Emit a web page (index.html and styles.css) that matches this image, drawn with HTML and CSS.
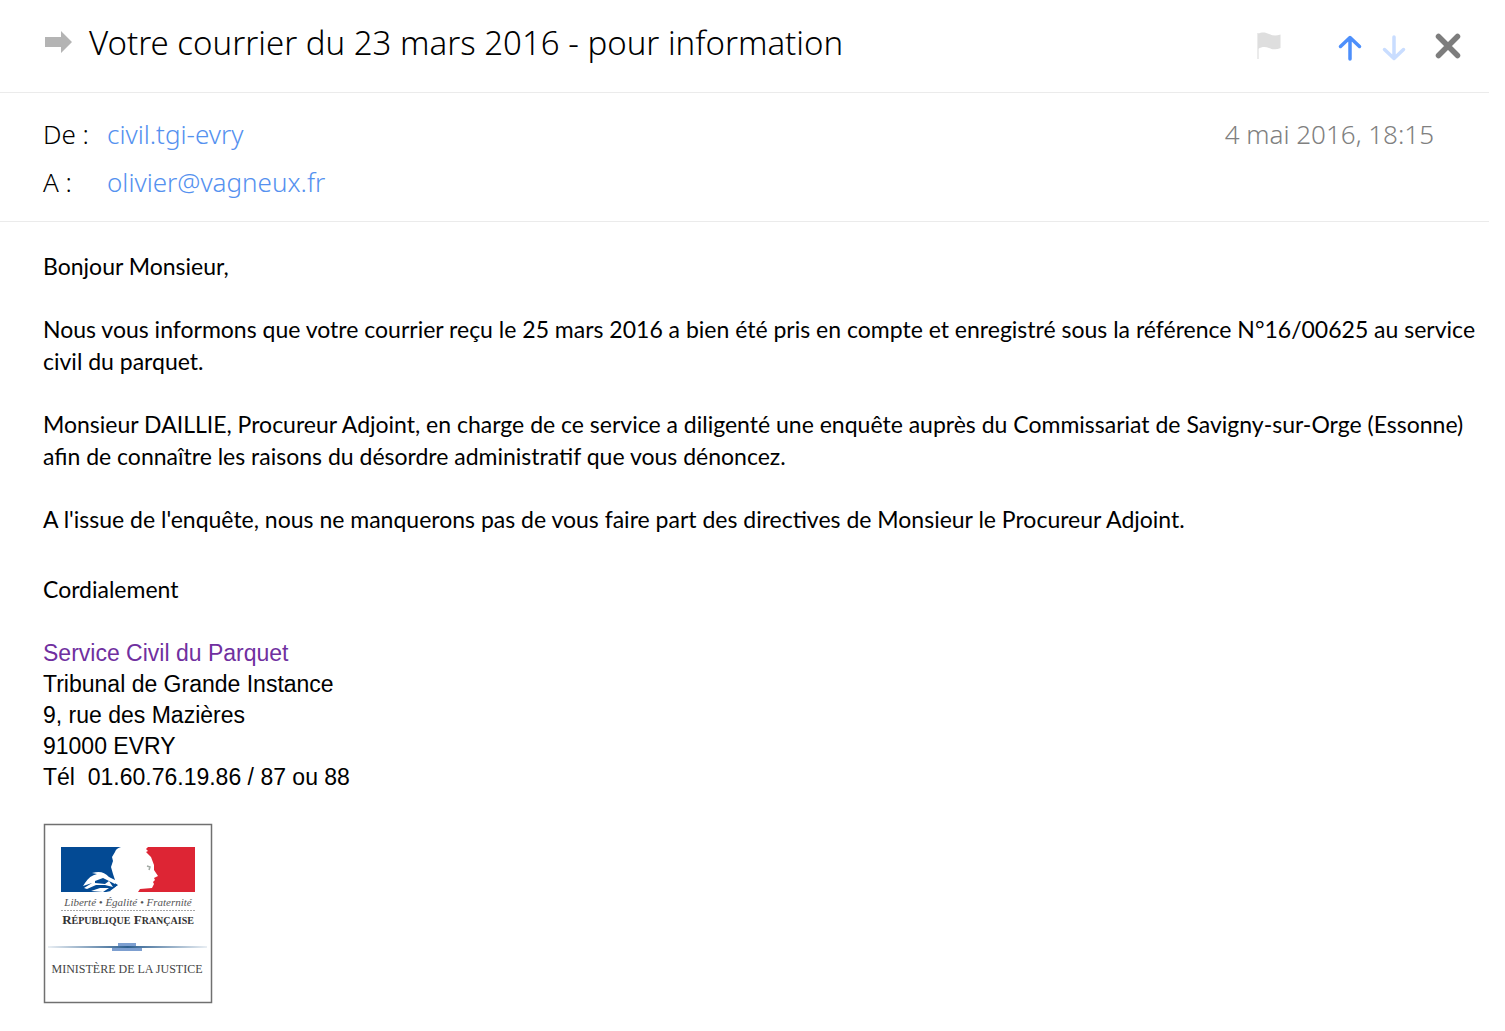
FILE: index.html
```html
<!DOCTYPE html>
<html lang="fr">
<head>
    <meta charset="UTF-8">
    <meta name="viewport" content="width=device-width, initial-scale=1.0">
    <title>Votre courrier du 23 mars 2016 - pour information</title>
    <link rel="stylesheet" href="styles.css">
</head>
<body>
    <main class="mail">
        <header class="mail-header">
            <svg class="forward-icon" viewBox="0 0 27 22" aria-hidden="true">
                <path d="M0 6h16V0l11 11-11 11v-6H0z" fill="#b4b4b4"/>
            </svg>
            <h1>Votre courrier du 23 mars 2016 - pour information</h1>
            <div class="actions">
                <button type="button" class="flag-btn" aria-label="Marquer">
                    <svg width="24" height="28" viewBox="0 0 24 28">
                        <path d="M1 1v26" stroke="#e4e4e4" stroke-width="1.5"/>
                        <path d="M1 2C5-.5 9 .5 12 2s7 2 11.500 .5V16c-4 2-8 1.500-11.500 0S5 14.500 1 17z" fill="#dedede"/>
                    </svg>
                </button>
                <button type="button" class="prev-btn" aria-label="Message précédent">
                    <svg width="24" height="26" viewBox="0 0 24 26">
                        <path d="M12 24V3M2.500 11.500L12 2.500l9.500 9" fill="none" stroke="#4d8ffb" stroke-width="3.500" stroke-linecap="round" stroke-linejoin="round"/>
                    </svg>
                </button>
                <button type="button" class="next-btn" aria-label="Message suivant" disabled>
                    <svg width="24" height="26" viewBox="0 0 24 26">
                        <path d="M12 2v21M2.500 14.500L12 23.500l9.500-9" fill="none" stroke="#c9ddff" stroke-width="3.500" stroke-linecap="round" stroke-linejoin="round"/>
                    </svg>
                </button>
                <button type="button" class="close-btn" aria-label="Fermer">
                    <svg width="26" height="26" viewBox="0 0 26 26">
                        <path d="M3.500 3.500l19 19M22.500 3.500l-19 19" stroke="#7d7d7d" stroke-width="5.500" stroke-linecap="round"/>
                    </svg>
                </button>
            </div>
        </header>

        <section class="mail-info">
            <dl class="people">
                <dt>De :</dt>
                <dd><a href="#">civil.tgi-evry</a></dd>
                <dt>A :</dt>
                <dd><a href="mailto:olivier@vagneux.fr">olivier@vagneux.fr</a></dd>
            </dl>
            <time datetime="2016-05-04T18:15">4 mai 2016, 18:15</time>
        </section>

        <article class="mail-body">
            <p>Bonjour Monsieur,</p>
            <p>Nous vous informons que votre courrier reçu le 25 mars 2016 a bien été pris en compte et enregistré sous la référence N°16/00625 au service<br>civil du parquet.</p>
            <p>Monsieur DAILLIE, Procureur Adjoint, en charge de ce service a diligenté une enquête auprès du Commissariat de Savigny-sur-Orge (Essonne)<br>afin de connaître les raisons du désordre administratif que vous dénoncez.</p>
            <p>A l'issue de l'enquête, nous ne manquerons pas de vous faire part des directives de Monsieur le Procureur Adjoint.</p>
            <p class="closing">Cordialement</p>

            <!-- Signature -->
            <address class="signature">
                <span class="service">Service Civil du Parquet</span><br>
                Tribunal de Grande Instance<br>
                9, rue des Mazières<br>
                91000 EVRY<br>
                Tél&nbsp; 01.60.76.19.86 / 87 ou 88
            </address>

            <svg class="logo" width="170" height="181" viewBox="0 0 170 181" role="img" aria-label="Ministère de la Justice">
                <defs>
                    <linearGradient id="rule" x1="0" x2="1" y1="0" y2="0">
                        <stop offset="0" stop-color="#2d5f8f" stop-opacity="0.1"/>
                        <stop offset="0.5" stop-color="#2d5f8f"/>
                        <stop offset="1" stop-color="#2d5f8f" stop-opacity="0.1"/>
                    </linearGradient>
                </defs>
                <rect x="1.500" y="1.500" width="167" height="178" fill="#fff" stroke="#707070" stroke-width="1.500"/>
                <!-- Flag with Marianne -->
                <path d="M18 24h60c-3 1-5 2-6 5l-3 5 1 4-2 6 2 7 2 6-2 2 5 3-7 6-5 1H18z" fill="#034a94"/>
                <path d="M105 24h47v45H95l2-3 12-1 2-4-1-2 2-2-1-2 4-2-4-6v-5l-3-8-5-5 2-1-2-2z" fill="#dd2534"/>
                <!-- Hand and sleeve -->
                <path d="M42 60c3-5 7-8 12-9l-5-1c8-2 12-1 17 4l6 3v4l-6-3 4 6-8-2h-9l-9 4-3-1 8-5-9 3z" fill="#fff"/>
                <path d="M48 68l9-3h9l-6 4zM67 68l7-5v3l-4 3z" fill="#fff"/>
                <path d="M52 58l8-3 6 3-4 3-10-1z" fill="#034a94"/>
                <path d="M104 43l3 1-1 3" fill="none" stroke="#a2a9a4" stroke-width="1.500"/>
                <text class="motto" x="85" y="83" text-anchor="middle">Liberté • Égalité • Fraternité</text>
                <path d="M18 87.500h134" stroke="#a5a5a5" stroke-dasharray="2 1"/>
                <text class="republic" x="85" y="101" text-anchor="middle">R<tspan class="small">ÉPUBLIQUE</tspan> F<tspan class="small">RANÇAISE</tspan></text>
                <rect x="5" y="123" width="159" height="2" fill="url(#rule)"/>
                <path d="M75 120h18v3h-18zM69 125h30v3H69z" fill="#7d9fd0"/>
                <text class="ministry" x="84" y="150" text-anchor="middle">MINISTÈRE DE LA JUSTICE</text>
            </svg>
        </article>
    </main>
</body>
</html>
```

FILE: styles.css
```css
/* Global Styles */
body {
    margin: 0;
    background-color: #fff;
    color: #000;
    font-family: "Noto Sans", "Open Sans", sans-serif;
}

.mail {
    margin-right: 16px;
}

/* Header Styles */
.mail-header {
    display: flex;
    align-items: center;
    box-sizing: border-box;
    height: 93px;
    padding: 0 28px 6px 45px;
    border-bottom: 1px solid #ebebeb;
}

.forward-icon {
    width: 27px;
    height: 22px;
    margin-bottom: 2px;
}

h1 {
    margin: 0 0 0 17px;
    font-size: 33px;
    font-weight: 300;
    line-height: 44px;
    white-space: nowrap;
}

.actions {
    display: flex;
    align-items: center;
    margin-left: auto;
    padding-top: 5px;
}

.actions button {
    display: flex;
    padding: 0;
    border: none;
    background: none;
    cursor: pointer;
}

.actions .prev-btn {
    margin-left: 57px;
    padding-top: 5px;
}

.actions .next-btn {
    margin-left: 20px;
    padding-top: 5px;
}

.actions .close-btn {
    margin-left: 29px;
}

/* Sender, recipient and date */
.mail-info {
    display: flex;
    justify-content: space-between;
    padding: 17px 55px 15px 43px;
    border-bottom: 1px solid #ebebeb;
    font-size: 26px;
    font-weight: 300;
    line-height: 48px;
}

.people {
    display: grid;
    grid-template-columns: 64px auto;
    margin: 0;
}

.people dd {
    margin: 0;
}

.people a {
    color: #5591ef;
    text-decoration: none;
}

time {
    color: #808080;
}

/* Message Styles */
.mail-body {
    padding: 28px 0 24px 43px;
    font-family: Lato, sans-serif;
    font-size: 23px;
    line-height: 32px;
}

.mail-body p {
    margin: 0 0 31px;
    white-space: nowrap;
}

.mail-body .closing {
    margin: 38px 0 33px;
}

.signature {
    font-family: "Liberation Sans", Arial, sans-serif;
    font-size: 23px;
    font-style: normal;
    line-height: 31px;
}

.service {
    color: #7030a0;
}

/* Logo Styles */
.logo {
    display: block;
    margin-top: 30px;
    font-family: "Liberation Serif", serif;
}

.motto {
    fill: #555;
    font-size: 11px;
    font-style: italic;
}

.republic {
    fill: #333;
    font-size: 13px;
    font-weight: bold;
}

.republic .small {
    font-size: 10px;
}

.ministry {
    fill: #444;
    font-size: 12px;
}
```
